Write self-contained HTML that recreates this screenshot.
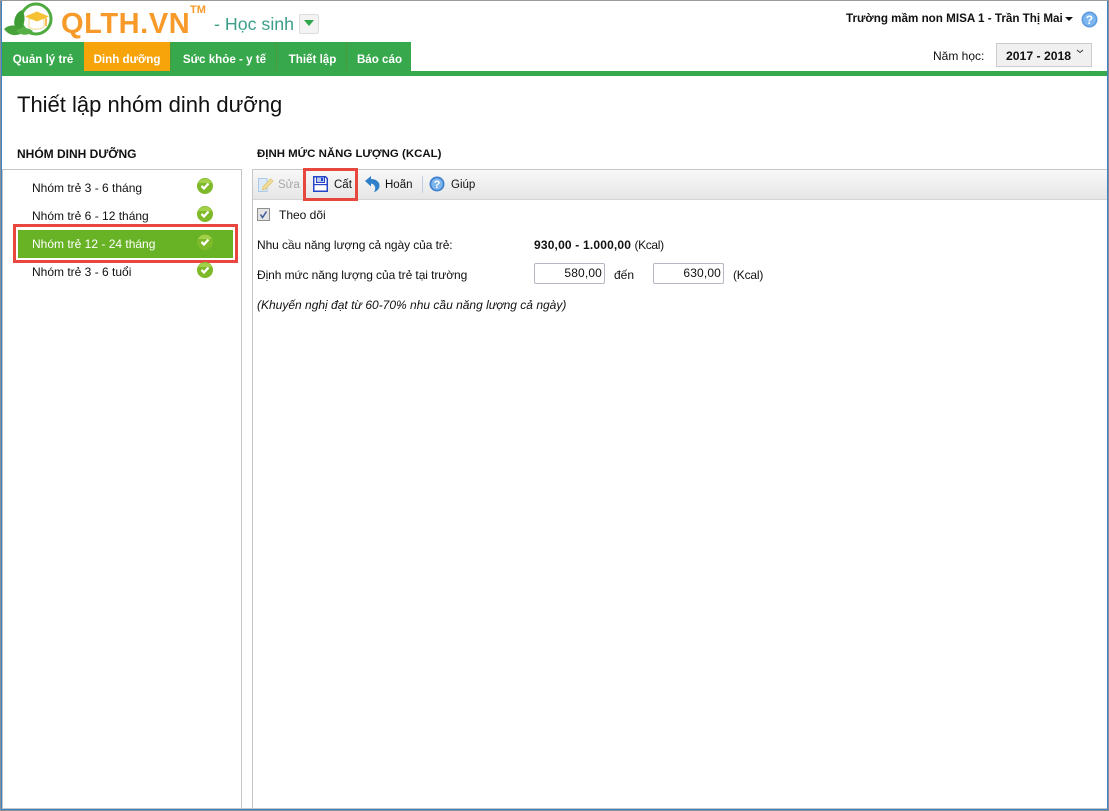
<!DOCTYPE html>
<html><head><meta charset="utf-8"><style>
html,body{margin:0;padding:0;background:#fff}
body{width:1109px;height:811px;position:relative;overflow:hidden;font-family:"Liberation Sans",sans-serif;font-size:12px;color:#111}
.a{position:absolute;white-space:nowrap}
.t{position:absolute;white-space:nowrap;line-height:16px}
.b{font-weight:bold}
.tab{position:absolute;top:42px;height:29px;line-height:35px;background:#37a84c;color:#fff;font-weight:bold;text-align:center;font-size:11.6px;box-sizing:border-box}
.sep{position:absolute;top:42px;width:1px;height:29px;background:#4c9a38}
.inp{position:absolute;top:263px;height:21px;width:71px;box-sizing:border-box;border:1px solid #b4b8c4;border-radius:2px;text-align:right;padding-right:2px;line-height:19px;font-size:12px;letter-spacing:.15px}
</style></head><body>
<div class="a" style="left:0;top:0;width:1109px;height:1px;background:#9b9b9b"></div>
<div class="a" style="left:0;top:1px;width:1px;height:810px;background:#8a8f95"></div>
<div class="a" style="left:1px;top:1px;width:1px;height:810px;background:#3a83c4"></div>
<div class="a" style="left:1107px;top:1px;width:1px;height:810px;background:#3a83c4"></div>
<div class="a" style="left:1108px;top:1px;width:1px;height:810px;background:#8a8f95"></div>

<svg class="a" style="left:0;top:0" width="60" height="42" viewBox="0 0 60 42">
<circle cx="36" cy="19" r="15" fill="none" stroke="#4fab40" stroke-width="3"/>
<path d="M22 10C13 14 12 26 18 33C24 28 27 17 22 10Z" fill="#3f9c35"/>
<path d="M4 29C10 23 20 25 24 32C17 37 9 36 4 29Z" fill="#46a238"/>
<path d="M16 31C21 27 28 27 33 31C29 36 21 36 16 31Z" fill="#57b046"/>
<path d="M29 19V27C33 30 39 30 44 27V19Z" fill="#fff" stroke="#ecd78f"/>
<path d="M25 16.500L37 11.500L49 16.500L37 21.500Z" fill="#f7c135"/>
<path d="M46 18V26" stroke="#f2a81e" stroke-width="1.500"/>
</svg>
<div class="a" style="left:61px;top:4px;font-size:29px;line-height:40px;font-weight:bold;color:#f79a29;letter-spacing:.6px">QLTH.VN</div>
<div class="a" style="left:190px;top:4px;font-size:11px;line-height:12px;font-weight:bold;color:#f79a29">TM</div>
<div class="a" style="left:214px;top:13px;font-size:17.800px;line-height:22px;color:#3c9f8a">- Học sinh</div>
<div class="a" style="left:299px;top:14px;width:20px;height:20px;box-sizing:border-box;border:1px solid #ddd;border-radius:2px;background:#f3f3f3"></div>
<div class="a" style="left:304px;top:20px;width:0;height:0;border-left:5px solid transparent;border-right:5px solid transparent;border-top:6px solid #2ea64b"></div>

<div class="a" style="left:2px;top:71px;width:1105px;height:5px;background:#37a84c"></div>
<div class="tab" style="left:2px;width:82px">Quản lý trẻ</div>
<div class="tab" style="left:84px;width:86px;background:#f7a30a">Dinh dưỡng</div>
<div class="sep" style="left:170px"></div>
<div class="tab" style="left:171px;width:105px;padding-left:2px">Sức khỏe - y tế</div>
<div class="sep" style="left:276px"></div>
<div class="tab" style="left:277px;width:69px;padding-left:2px">Thiết lập</div>
<div class="sep" style="left:346px"></div>
<div class="tab" style="left:347px;width:64px;padding-left:1px">Báo cáo</div>

<div class="t b" style="left:846px;top:11px;font-size:11.650px">Trường mầm non MISA 1 - Trần Thị Mai</div>
<div class="a" style="left:1065px;top:17px;width:0;height:0;border-left:4px solid transparent;border-right:4px solid transparent;border-top:4px solid #111"></div>
<svg class="a" style="left:1081px;top:11px" width="17" height="17" viewBox="0 0 16 16"><circle cx="8" cy="8" r="7.500" fill="#5a9be0"/><circle cx="8" cy="8" r="6" fill="#7db5ee"/><text x="8" y="12" text-anchor="middle" font-family="Liberation Sans" font-weight="bold" font-size="11" fill="#fff">?</text></svg>
<div class="t" style="left:933px;top:48px;font-size:12px">Năm học:</div>
<div class="a" style="left:996px;top:43px;width:96px;height:24px;box-sizing:border-box;border:1px solid #ccc;background:#f0f0f0"></div>
<div class="t b" style="left:1006px;top:48px;font-size:12.200px">2017 - 2018</div>
<svg class="a" style="left:1076px;top:49px" width="8" height="5" viewBox="0 0 8 5"><path d="M1 1L4 3.500L7 1" fill="none" stroke="#333" stroke-width="1"/></svg>

<div class="a" style="left:17px;top:90px;font-size:22px;line-height:30px;color:#111">Thiết lập nhóm dinh dưỡng</div>
<div class="t b" style="left:17px;top:146px;font-size:12px">NHÓM DINH DƯỠNG</div>
<div class="t b" style="left:257px;top:146px;font-size:11.450px">ĐỊNH MỨC NĂNG LƯỢNG (KCAL)</div>

<div class="a" style="left:2px;top:169px;width:240px;height:640px;box-sizing:border-box;border:1px solid #c6c6c6"></div>
<div class="t" style="left:32px;top:180px">Nhóm trẻ 3 - 6 tháng</div>
<div class="t" style="left:32px;top:208px">Nhóm trẻ 6 - 12 tháng</div>
<div class="a" style="left:13px;top:224px;width:225px;height:39px;box-sizing:border-box;border:3px solid #e8473f"></div>
<div class="a" style="left:18px;top:230px;width:215px;height:28px;background:#68b226"></div>
<div class="t" style="left:32px;top:236px;color:#fff">Nhóm trẻ 12 - 24 tháng</div>
<div class="t" style="left:32px;top:264px">Nhóm trẻ 3 - 6 tuổi</div>
<svg width="0" height="0" style="position:absolute"><symbol id="ck" viewBox="0 0 16 16"><circle cx="8" cy="8" r="8" fill="#7eb92a"/><path d="M1 5A8 8 0 0 1 15 5Z" fill="#a4d04a"/><path d="M4.500 8L7 10.500L11.500 5.500" fill="none" stroke="#fff" stroke-width="2.300"/></symbol></svg>
<svg class="a" style="left:197px;top:178px" width="16" height="16"><use href="#ck"/></svg>
<svg class="a" style="left:197px;top:206px" width="16" height="16"><use href="#ck"/></svg>
<svg class="a" style="left:197px;top:234px" width="16" height="16"><use href="#ck"/></svg>
<svg class="a" style="left:197px;top:262px" width="16" height="16"><use href="#ck"/></svg>

<div class="a" style="left:252px;top:169px;width:855px;height:640px;box-sizing:border-box;border-left:1px solid #c6c6c6;border-top:1px solid #c6c6c6"></div>
<div class="a" style="left:253px;top:170px;width:854px;height:30px;background:linear-gradient(#f8f8f8,#e6e6e6);border-bottom:1px solid #d4d4d4;box-sizing:border-box"></div>
<svg class="a" style="left:257px;top:176px" width="17" height="17" viewBox="0 0 17 17"><path d="M1.500 2.500H10V15.500H1.500Z" fill="#dcebf7" stroke="#a9cbe6"/><path d="M6 11L13.500 3L16 5L8.500 13L5.500 14Z" fill="#f3df9e" stroke="#e0c778"/></svg>
<div class="t" style="left:278px;top:177px;color:#a8a8a8;font-size:11.500px">Sửa</div>
<svg class="a" style="left:313px;top:176px" width="15" height="16" viewBox="0 0 15 16"><path d="M.75 .75H12.500L14.250 2.500V15.250H.75Z" fill="#fff" stroke="#2546c8" stroke-width="1.500"/><rect x="3.500" y="1" width="8" height="5.500" fill="#b9c9ee" stroke="#2546c8"/><rect x="8" y="2" width="2" height="3" fill="#2546c8"/><rect x="1" y="8" width="13" height="1.200" fill="#2546c8"/></svg>
<div class="t" style="left:334px;top:177px;font-size:11.500px">Cất</div>
<svg class="a" style="left:365px;top:176px" width="15" height="16" viewBox="0 0 15 16"><path d="M0 5L6 0V3C11 3 15 6 14.500 10.500C14 13 12 15.500 9 16C11.500 12.500 10 8 6 7.500V10.500Z" fill="#2f80c9"/></svg>
<div class="t" style="left:385px;top:177px;font-size:11.500px">Hoãn</div>
<div class="a" style="left:422px;top:176px;width:1px;height:17px;background:#bcd0e2"></div>
<svg class="a" style="left:429px;top:176px" width="16" height="16" viewBox="0 0 16 16"><circle cx="8" cy="8" r="7.500" fill="#3d80cf"/><circle cx="8" cy="8" r="5.800" fill="#7db4ea"/><text x="8" y="12" text-anchor="middle" font-family="Liberation Sans" font-weight="bold" font-size="11" fill="#fff">?</text></svg>
<div class="t" style="left:451px;top:177px;font-size:11.500px">Giúp</div>
<div class="a" style="left:303px;top:168px;width:55px;height:33px;box-sizing:border-box;border:3px solid #e8473f"></div>

<div class="a" style="left:257px;top:208px;width:13px;height:13px;box-sizing:border-box;border:1px solid #8e8f8f;background:#e4e4e4"></div>
<svg class="a" style="left:257px;top:208px" width="13" height="13" viewBox="0 0 13 13"><path d="M3.500 6.500L5.500 9.500L9.500 3.500" fill="none" stroke="#3d5a98" stroke-width="1.500"/></svg>
<div class="t" style="left:279px;top:207px">Theo dõi</div>
<div class="t" style="left:257px;top:237px;letter-spacing:-.09px">Nhu cầu năng lượng cả ngày của trẻ:</div>
<div class="t" style="left:534px;top:237px"><span class="b" style="letter-spacing:.18px">930,00 - 1.000,00</span> <span style="letter-spacing:-.35px">(Kcal)</span></div>
<div class="t" style="left:257px;top:267px;letter-spacing:-.08px">Định mức năng lượng của trẻ tại trường</div>
<div class="inp" style="left:534px">580,00</div>
<div class="t" style="left:614px;top:267px">đến</div>
<div class="inp" style="left:653px">630,00</div>
<div class="t" style="left:733px;top:267px;letter-spacing:-.2px">(Kcal)</div>
<div class="t" style="left:257px;top:297px;font-style:italic">(Khuyến nghị đạt từ 60-70% nhu cầu năng lượng cả ngày)</div>

<div class="a" style="left:2px;top:808px;width:1105px;height:1px;background:#c6c6c6"></div>
<div class="a" style="left:1px;top:809px;width:1107px;height:1px;background:#3a83c4"></div>
<div class="a" style="left:0;top:810px;width:1109px;height:1px;background:#8a8f95"></div>
</body></html>
